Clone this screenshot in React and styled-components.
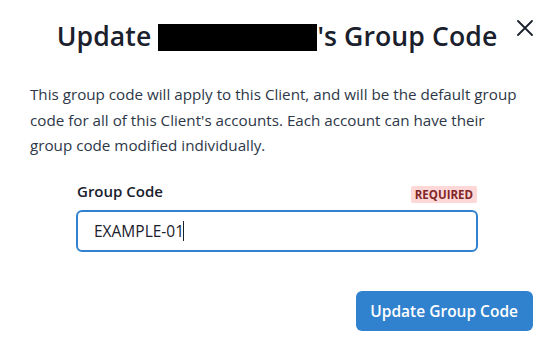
import React, { useState } from 'react';
import styled, { createGlobalStyle } from 'styled-components';

const GlobalStyle = createGlobalStyle`
  html, body {
    margin: 0;
    padding: 0;
    background: #ffffff;
  }
  body {
    font-family: "Open Sans", "Noto Sans", sans-serif;
    color: #1a202c;
  }
  * {
    box-sizing: border-box;
  }
`;

const Modal = styled.section`
  position: relative;
  width: 554px;
  height: 346px;
  background: #ffffff;
  display: flex;
  flex-direction: column;
`;

const Header = styled.header`
  padding: 18px 30px 0;
  text-align: center;
`;

const Title = styled.h2`
  margin: 0;
  font-size: 26.6px;
  font-weight: 600;
  line-height: 36px;
  color: #1a202c;
  letter-spacing: 0.1px;
`;

const Redacted = styled.span`
  display: inline-block;
  width: 159px;
  height: 27px;
  background: #000000;
  vertical-align: -5px;
`;

const CloseButton = styled.button`
  position: absolute;
  top: 12px;
  right: 13px;
  width: 32px;
  height: 32px;
  border: 0;
  background: transparent;
  padding: 0;
  display: flex;
  align-items: center;
  justify-content: center;
  cursor: pointer;
  color: #1a202c;
`;

const Body = styled.div`
  padding: 28px 30px 0;
  flex: 1;
`;

const Intro = styled.p`
  margin: 0;
  font-size: 15.2px;
  line-height: 25.5px;
  color: #2d3748;
`;

const Field = styled.div`
  width: 402px;
  margin: 22px auto 0;
`;

const LabelRow = styled.div`
  display: flex;
  justify-content: space-between;
  align-items: flex-start;
  height: 20px;
  margin-bottom: 9px;
`;

const Label = styled.label`
  font-size: 15px;
  font-weight: 600;
  color: #1a202c;
  line-height: 20px;
  padding-left: 1px;
`;

const Badge = styled.span`
  margin-top: 5px;
  background: #fed7d7;
  color: #822727;
  font-size: 11.5px;
  font-weight: 700;
  text-transform: uppercase;
  padding: 0 4px;
  line-height: 17px;
  border-radius: 2px;
  margin-right: 1px;
`;

const InputWrap = styled.div`
  position: relative;
`;

const Input = styled.input`
  display: block;
  width: 100%;
  height: 42px;
  border: 2px solid #3182ce;
  border-radius: 6px;
  padding: 0 16px;
  font-family: "Open Sans", "Noto Sans", sans-serif;
  font-size: 15.5px;
  color: #1a202c;
  outline: none;
  caret-color: #1a202c;
`;

const Caret = styled.span`
  position: absolute;
  left: ${(props) => props.offset}px;
  top: 11px;
  width: 1px;
  height: 20px;
  background: #1a202c;
  pointer-events: none;
`;

const Footer = styled.footer`
  display: flex;
  justify-content: flex-end;
  padding: 0 21px 15px 24px;
`;

const PrimaryButton = styled.button`
  height: 40px;
  padding: 0 15px 0 14px;
  border: 0;
  border-radius: 6px;
  background: #3182ce;
  color: #ffffff;
  font-family: "Open Sans", "Noto Sans", sans-serif;
  font-size: 15.5px;
  font-weight: 600;
  cursor: pointer;
`;

const CloseIcon = () => (
  <svg width="16" height="16" viewBox="0 0 16 16" fill="none">
    <path d="M1 1L15 15M15 1L1 15" stroke="currentColor" strokeWidth="1.8" strokeLinecap="round" />
  </svg>
);

export default function App() {
  const [code, setCode] = useState('EXAMPLE-01');
  return (
    <>
      <GlobalStyle />
      <Modal>
        <Header>
          <Title>
            Update <Redacted />'s Group Code
          </Title>
        </Header>
        <CloseButton aria-label="Close">
          <CloseIcon />
        </CloseButton>
        <Body>
          <Intro>
            This group code will apply to this Client, and will be the default group
            code for all of this Client's accounts. Each account can have their
            group code modified individually.
          </Intro>
          <Field>
            <LabelRow>
              <Label htmlFor="group-code">Group Code</Label>
              <Badge>Required</Badge>
            </LabelRow>
            <InputWrap>
              <Input
                id="group-code"
                value={code}
                onChange={(e) => setCode(e.target.value)}
              />
              <Caret offset={107} />
            </InputWrap>
          </Field>
        </Body>
        <Footer>
          <PrimaryButton>Update Group Code</PrimaryButton>
        </Footer>
      </Modal>
    </>
  );
}
